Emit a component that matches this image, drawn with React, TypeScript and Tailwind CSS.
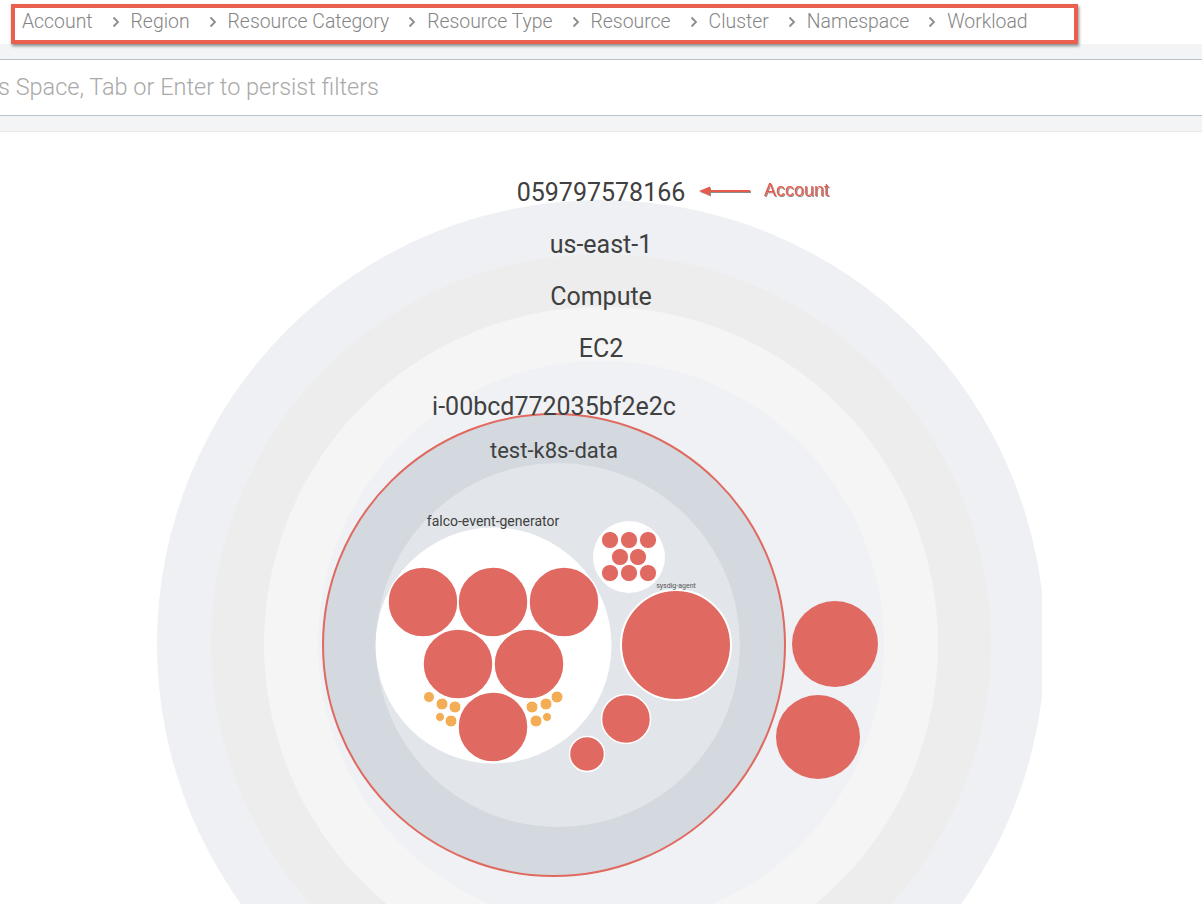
import React from "react";

const crumbs = ["Account", "Region", "Resource Category", "Resource Type", "Resource", "Cluster", "Namespace", "Workload"];

const RED = "#e06a62";
const ORANGE = "#f2ad55";

function Chevron() {
  return (
    <svg width="8" height="12" viewBox="0 0 8 12" className="ml-[19px] mr-[11px] shrink-0">
      <polyline points="1.5,1.5 6,6 1.5,10.5" fill="none" stroke="#8c8c8c" strokeWidth="1.8" />
    </svg>
  );
}

function Breadcrumbs() {
  return (
    <div className="h-[59px] bg-[linear-gradient(to_bottom,#ffffff_44px,#f3f4f5_44px)] pt-[4px] pl-[11px]">
      <div className="w-[1067px] h-[40px] border-[4px] border-[#e9604f] bg-white shadow-[1px_2px_3px_rgba(0,0,0,0.45)] flex items-center pl-[7px] pb-[4px] text-[19.4px] font-light text-[#858585]">
        {crumbs.map((c, i) => (
          <span key={c} className="flex items-center whitespace-nowrap">
            {i > 0 && <Chevron />}
            {c}
          </span>
        ))}
      </div>
    </div>
  );
}

function FilterBar() {
  return (
    <div>
      <div className="h-[1px] bg-[#b9c2c9]" />
      <div className="h-[55px] flex items-center text-[23.5px] font-light text-[#a9a9a9] -ml-[2px] whitespace-nowrap">
        s Space, Tab or Enter to persist filters
      </div>
      <div className="h-[1px] bg-[#b9c2c9]" />
      <div className="h-[15px] bg-[#f3f4f5]" />
      <div className="h-[1px] bg-[#e6e8ea]" />
    </div>
  );
}

const podsBig = [
  [423, 602], [493, 602], [564, 602],
  [458, 664], [529, 664], [493, 727],
];

const podsOrange: [number, number, number][] = [
  [429, 697, 5.5], [442, 704, 6], [455, 707, 6], [440, 717, 4.5], [451, 721, 6],
  [557, 697, 6], [546, 704, 6], [532, 707, 6], [547, 717, 4.5], [536, 721, 6],
];

const podsSmall = [
  [610, 540], [629, 540], [648, 540],
  [620, 557], [638, 557],
  [610, 573], [629, 573], [648, 573],
];

function Chart() {
  const label = "#404040";
  return (
    <svg width="1042" height="772" viewBox="0 132 1042 772" className="block" style={{ fontFamily: "Roboto, 'Noto Sans', sans-serif" }}>
      <defs>
        <filter id="ds" x="-20%" y="-40%" width="140%" height="180%">
          <feDropShadow dx="1" dy="1" stdDeviation="0.7" floodColor="#000" floodOpacity="0.45" />
        </filter>
      </defs>

      {/* account / region / category / type */}
      <circle cx="601" cy="644" r="444" fill="#eef0f3" />
      <circle cx="601" cy="644" r="390" fill="#ededed" />
      <circle cx="601" cy="644" r="337" fill="#f5f5f5" />
      <circle cx="601" cy="644" r="283" fill="#eff1f4" />

      {/* cluster */}
      <circle cx="554" cy="645" r="231" fill="#d3d9df" stroke="#e06a60" strokeWidth="2" />
      <circle cx="558" cy="645" r="182" fill="#e2e6ea" />

      {/* falco-event-generator */}
      <circle cx="493.5" cy="645.5" r="118" fill="#ffffff" />
      {podsBig.map(([x, y], i) => (
        <circle key={i} cx={x} cy={y} r="35" fill={RED} stroke="#fff" strokeWidth="1.5" />
      ))}
      {podsOrange.map(([x, y, r], i) => (
        <circle key={i} cx={x} cy={y} r={r} fill={ORANGE} stroke="#fff" strokeWidth="1" />
      ))}

      {/* small namespace */}
      <circle cx="629" cy="557" r="36" fill="#ffffff" />
      {podsSmall.map(([x, y], i) => (
        <circle key={i} cx={x} cy={y} r="8.6" fill={RED} stroke="#fff" strokeWidth="1" />
      ))}

      {/* sysdig-agent and others */}
      <circle cx="676" cy="645" r="55" fill={RED} stroke="#fff" strokeWidth="2" />
      <circle cx="626" cy="719" r="24.5" fill={RED} stroke="#fff" strokeWidth="1.5" />
      <circle cx="587" cy="754" r="17.5" fill={RED} stroke="#fff" strokeWidth="1.5" />

      {/* outside cluster */}
      <circle cx="835" cy="644" r="43" fill={RED} />
      <circle cx="818" cy="737" r="42" fill={RED} />

      {/* labels */}
      <g fill={label} textAnchor="middle">
        <text x="601" y="201" fontSize="25">059797578166</text>
        <text x="601" y="253" fontSize="25">us-east-1</text>
        <text x="601" y="305" fontSize="25">Compute</text>
        <text x="601" y="357" fontSize="25">EC2</text>
        <text x="554" y="415" fontSize="25">i-00bcd772035bf2e2c</text>
        <text x="554" y="458" fontSize="22">test-k8s-data</text>
        <text x="493" y="526" fontSize="14">falco-event-generator</text>
        <text x="676" y="588" fontSize="7" fill="#555">sysdig-agent</text>
      </g>

      {/* annotation */}
      <g filter="url(#ds)">
        <line x1="708" y1="191" x2="750" y2="191" stroke="#e45a4c" strokeWidth="2" />
        <polygon points="699,191 710,186.5 710,195.5" fill="#e45a4c" />
        <text x="764" y="196" fontSize="18" fill="#e45a4c" style={{ fontFamily: "'Liberation Sans', Arial, sans-serif" }}>
          Account
        </text>
      </g>
    </svg>
  );
}

export default function App() {
  return (
    <div className="w-[1202px] h-[904px] overflow-hidden bg-white font-['Roboto','Noto_Sans',sans-serif]">
      <Breadcrumbs />
      <FilterBar />
      <Chart />
    </div>
  );
}
